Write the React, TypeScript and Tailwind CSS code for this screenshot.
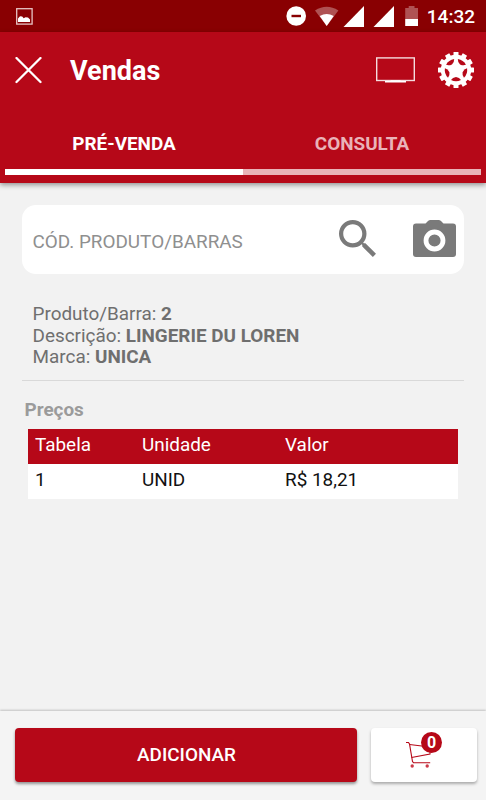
import { useState } from "react";

const tabs = ["PRÉ-VENDA", "CONSULTA"];

const product = [
  { label: "Produto/Barra", value: "2" },
  { label: "Descrição", value: "LINGERIE DU LOREN" },
  { label: "Marca", value: "UNICA" },
];

const prices = [{ table: "1", unit: "UNID", price: "R$ 18,21" }];

const teeth = [0, 30, 60, 90, 120, 150, 180, 210, 240, 270, 300, 330];
const slots = [36, 108, 180, 252, 324];

function StatusBar() {
  return (
    <div className="flex h-8 items-center justify-between bg-[#890002] pl-4 pr-[11px] text-white">
      <svg className="size-[17px]" viewBox="0 0 17 17" fill="none" aria-hidden>
        <rect x="0.7" y="0.7" width="15.4" height="15.4" stroke="#e6c3c4" strokeWidth="1.3" />
        <path d="M2 14v-3.5L4 8.3l2.2.2 1.5 1.8 1.8-1 2.5.2 2 2V14z" fill="white" />
      </svg>
      <div className="flex items-center">
        <svg className="h-8 w-[140px]" viewBox="286 0 140 32" fill="white" aria-hidden>
          <circle cx="296.2" cy="16" r="9.8" />
          <rect x="291.5" y="14.8" width="9.5" height="2.4" fill="#890002" />
          <path d="M315 10.5q11.7-7.5 23.4 0L326.7 26z" opacity="0.32" />
          <path d="M319.7 16q7-4 14 0l-7 10z" />
          <path d="M364 6v21h-20.5z" />
          <path d="M394 6v21h-20.5z" />
          <path d="M405.2 19V8h3.500V6h5.800v2h3.500v11z" opacity="0.32" />
          <path d="M405.2 19h12.8v7h-12.8z" />
        </svg>
        <span className="ml-px mt-px text-[19px] leading-none font-medium">14:32</span>
      </div>
    </div>
  );
}

function GearIcon() {
  return (
    <svg className="size-9" viewBox="-18 -18 36 36" fill="white" aria-hidden>
      <circle r="15.2" />
      {teeth.map((angle) => (
        <rect key={angle} x="-2.5" y="-18" width="5" height="5" rx="0.5" transform={`rotate(${angle})`} />
      ))}
      {slots.map((angle) => (
        <path
          key={angle}
          d="M-5-10Q0-12.6 5-10Q3.5-7.5 0-6.9Q-3.5-7.5-5-10z"
          fill="#b60818"
          transform={`rotate(${angle})`}
        />
      ))}
    </svg>
  );
}

function CartIcon() {
  return (
    <svg className="h-7 w-[26px]" viewBox="0 0 26 28" fill="none" stroke="#b60818" aria-hidden>
      <path d="M0 1.5h2.5L3.5 3l3 17.5 1 1.2h16.7" strokeWidth="1.1" />
      <path d="M3.5 3.5L24 6M5.5 16.5L24 13V6" strokeWidth="1.1" />
      <circle cx="6.2" cy="25" r="1.7" fill="#cc3a48" stroke="none" />
      <circle cx="21.2" cy="25" r="1.7" fill="#cc3a48" stroke="none" />
    </svg>
  );
}

export default function App() {
  const [active, setActive] = useState(0);
  const [code, setCode] = useState("");
  const [count, setCount] = useState(0);

  return (
    <div className="flex h-[800px] w-[486px] flex-col overflow-hidden bg-[#f2f2f2] font-['Roboto',sans-serif] text-[18.9px]">
      <StatusBar />

      <header className="h-[151px] shrink-0 bg-[#b60818] text-white shadow-[0_2px_5px_rgba(0,0,0,0.4)]">
        <div className="flex h-[76px] items-center pl-[15px] pr-3">
          <button type="button" aria-label="Fechar">
            <svg className="size-[27px]" viewBox="0 0 27 27" stroke="white" strokeWidth="2.3" strokeLinecap="round" aria-hidden>
              <path d="M1.5 1l24 24M25.5 1l-24 24" />
            </svg>
          </button>
          <h1 className="ml-7 mt-0.5 text-[27px] font-bold">Vendas</h1>
          <button type="button" aria-label="Tela" className="ml-auto mr-[23px]">
            <svg className="h-[27px] w-[39px]" viewBox="0 0 39 27" fill="none" aria-hidden>
              <rect x="0.7" y="0.9" width="37.6" height="22.6" stroke="#f4dcde" strokeWidth="1.4" />
              <path d="M9 24.8h21M14.5 24h10" stroke="white" strokeWidth="1.6" />
            </svg>
          </button>
          <button type="button" aria-label="Configurações">
            <GearIcon />
          </button>
        </div>

        <div className="grid grid-cols-2 px-[5px]">
          {tabs.map((tab, i) => (
            <button
              key={tab}
              type="button"
              onClick={() => setActive(i)}
              className={`flex h-[67px] items-center justify-center border-b-[6px] pt-[11px] font-bold ${
                active === i ? "border-white text-white" : "border-[#e9b3b8] text-[#e9b3b8]"
              }`}
            >
              {tab}
            </button>
          ))}
        </div>
      </header>

      <main className="flex-1 px-[22px] pt-[22px]">
        <div className="flex h-[69px] items-center rounded-[14px] bg-white pl-[10.5px] pr-2">
          <input
            value={code}
            onChange={(e) => setCode(e.target.value)}
            placeholder="CÓD. PRODUTO/BARRAS"
            className="mt-[5px] w-[280px] outline-none placeholder:text-[#8f8f8f]"
          />
          <button type="button" aria-label="Buscar" className="mb-[3px] ml-[26px]">
            <svg className="size-[37px]" viewBox="3 3 17.5 17.5" fill="#7a7a7a" aria-hidden>
              <path d="M15.5 14h-.79l-.28-.27A6.471 6.471 0 0 0 16 9.5 6.5 6.5 0 1 0 9.5 16c1.61 0 3.09-.59 4.23-1.57l.27.28v.79l5 4.99L20.49 19l-4.99-5zm-6 0C7.01 14 5 11.99 5 9.5S7.01 5 9.5 5 14 7.01 14 9.5 11.99 14 9.5 14z" />
            </svg>
          </button>
          <button type="button" aria-label="Câmera" className="mb-[3px] ml-auto">
            <svg className="h-[37px] w-[43px]" viewBox="0 0 43 37" aria-hidden>
              <path
                d="M3 3.5h9.5l2.5-2.5q1-1 2.5-1h8q1.500 0 2.500 1l2.500 2.500H40q3 0 3 3v27.500q0 3-3 3H3q-3 0-3-3V6.500q0-3 3-3z"
                fill="#7a7a7a"
              />
              <circle cx="21.5" cy="20.5" r="8.5" fill="none" stroke="white" strokeWidth="4.8" />
            </svg>
          </button>
        </div>

        <div className="h-[107px] border-b border-[#d9d9d9] pl-[10.5px] pt-[29px] leading-[21.6px] text-[#6f6f6f]">
          {product.map((item) => (
            <p key={item.label}>
              {item.label}: <strong className="font-bold">{item.value}</strong>
            </p>
          ))}
        </div>

        <h2 className="ml-[2.5px] mt-[17px] leading-6 font-bold text-[#9b9b9b]">Preços</h2>
        <table className="ml-1.5 mt-[6.5px] w-[430px] table-fixed border-collapse text-left">
          <thead>
            <tr className="h-[35px] bg-[#b60818] text-white">
              <th className="w-[107px] pb-0.5 pl-[7px] font-normal">Tabela</th>
              <th className="w-[143px] pb-0.5 pl-[7px] font-normal">Unidade</th>
              <th className="pb-0.5 pl-[7px] font-normal">Valor</th>
            </tr>
          </thead>
          <tbody>
            {prices.map((row) => (
              <tr key={row.unit} className="h-[35px] bg-white text-[#111]">
                <td className="pb-0.5 pl-[7px]">{row.table}</td>
                <td className="pb-0.5 pl-[7px]">{row.unit}</td>
                <td className="pb-0.5 pl-[7px]">{row.price}</td>
              </tr>
            ))}
          </tbody>
        </table>
      </main>

      <footer className="flex h-[89px] shrink-0 gap-3.5 bg-[#f4f4f4] pl-[15px] pr-[9px] pt-[17px] shadow-[0_-1px_2px_rgba(0,0,0,0.2)]">
        <button
          type="button"
          onClick={() => setCount(count + 1)}
          className="h-[54px] w-[342px] rounded-sm bg-[#b60818] pl-px font-medium text-white shadow-[0_2px_3px_rgba(0,0,0,0.4)]"
        >
          ADICIONAR
        </button>
        <button
          type="button"
          aria-label="Carrinho"
          className="relative flex h-[54px] flex-1 rounded-sm bg-white pl-[35px] pt-[13px] shadow-[0_2px_3px_rgba(0,0,0,0.3)]"
        >
          <CartIcon />
          <span className="absolute left-[50px] top-1 flex size-[21px] items-center justify-center rounded-full bg-[#b60818] text-[16px] font-bold text-white">
            {count}
          </span>
        </button>
      </footer>
    </div>
  );
}
